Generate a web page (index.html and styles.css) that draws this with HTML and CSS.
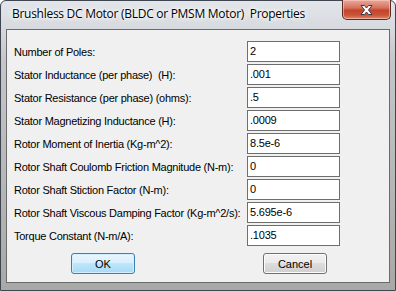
FILE: index.html
```html
<!DOCTYPE html>
<html>
<head>
<meta charset="utf-8">
<link rel="stylesheet" href="styles.css">
</head>
<body>
<div class="window">
  <div class="titlebar">
    <span class="title">Brushless DC Motor (BLDC or PMSM Motor)&nbsp; Properties</span>
    <button class="close" aria-label="Close">
      <svg width="17" height="12" viewBox="0 0 17 12">
        <path d="M3 1.5 L6.5 1.5 L8.5 4 L10.5 1.5 L14 1.5 L10.5 6 L14 10.5 L10.5 10.5 L8.5 8 L6.5 10.5 L3 10.5 L6.5 6 Z" fill="#fff" stroke="#3a3a4a" stroke-width="1" stroke-linejoin="round"/>
      </svg>
    </button>
  </div>
  <div class="client">
    <div class="form">
      <label>Number of Poles:</label><div class="field">2</div>
      <label>Stator Inductance (per phase)&nbsp; (H):</label><div class="field">.001</div>
      <label>Stator Resistance (per phase) (ohms):</label><div class="field">.5</div>
      <label>Stator Magnetizing Inductance (H):</label><div class="field">.0009</div>
      <label>Rotor Moment of Inertia (Kg-m^2):</label><div class="field">8.5e-6</div>
      <label>Rotor Shaft Coulomb Friction Magnitude (N-m):</label><div class="field">0</div>
      <label>Rotor Shaft Stiction Factor (N-m):</label><div class="field">0</div>
      <label>Rotor Shaft Viscous Damping Factor (Kg-m^2/s):</label><div class="field">5.695e-6</div>
      <label>Torque Constant (N-m/A):</label><div class="field">.1035</div>
    </div>
    <div class="buttons">
      <button class="btn ok">OK</button>
      <button class="btn cancel">Cancel</button>
    </div>
  </div>
</div>
</body>
</html>
```
FILE: styles.css
```css
* { box-sizing: border-box; }
html, body { margin: 0; padding: 0; background: #fff; }
.window {
  width: 396px;
  height: 291px;
  border: 1px solid #3f4650;
  border-radius: 6px 6px 0 0;
  background: linear-gradient(to bottom, #e2e5e9 0px, #d6d9dd 28px, #c4c6c9 60px, #a8a8a8 291px);
  padding: 0 5px 7px 5px;
  display: flex;
  flex-direction: column;
}
.titlebar {
  height: 28px;
  display: flex;
  align-items: flex-start;
  justify-content: space-between;
  margin-right: -1px;
}
.title {
  font-family: "Open Sans", "Noto Sans", sans-serif;
  font-size: 12px;
  color: #000;
  margin: 5px 0 0 6px;
  line-height: 16px;
  text-shadow: 0 0 6px #fff, 0 0 6px #fff, 0 0 3px #fff;
  letter-spacing: -0.28px;
}
.close {
  margin-top: -1px;
  width: 49px;
  height: 20px;
  border: 1px solid #5b2b24;
  border-top: none;
  border-radius: 0 0 5px 5px;
  background: linear-gradient(to bottom, #e9a99b 0%, #d7735f 40%, #c2452c 55%, #c9553a 80%, #dc8a6c 100%);
  box-shadow: inset 0 0 0 1px rgba(255,210,200,0.55);
  padding: 0;
  display: flex;
  align-items: center;
  justify-content: center;
}
.close svg { display: block; margin-top: 1px; }
.client {
  flex: 1;
  border: 1px solid #6b6b6b;
  background: #f0f0f0;
  padding: 11px 0 0 7px;
  font-family: "Liberation Sans", Arial, sans-serif;
  font-size: 11px;
  color: #000;
}
.form {
  display: grid;
  grid-template-columns: 233px 93px;
  grid-auto-rows: 21px;
  row-gap: 2px;
  align-items: center;
}
.form label { white-space: nowrap; letter-spacing: -0.25px; }
.field {
  height: 21px;
  background: #fff;
  border: 1px solid #6e6e6e;
  padding: 0 0 0 2px;
  line-height: 19px;
  letter-spacing: -0.2px;
}
.buttons {
  display: flex;
  margin-top: 7px;
  padding-left: 57px;
  gap: 128px;
}
.btn {
  width: 64px;
  height: 21px;
  border-radius: 3px;
  font-family: "Liberation Sans", Arial, sans-serif;
  font-size: 11px;
  color: #000;
  padding: 0;
}
.btn.ok {
  border: 1px solid #3c7fb1;
  background: linear-gradient(to bottom, #eaf6fd 0%, #d9f0fc 45%, #bee6fd 50%, #a7d9f5 100%);
  box-shadow: inset 0 0 0 1px #d0f0ff;
}
.btn.cancel {
  border: 1px solid #707070;
  background: linear-gradient(to bottom, #f2f2f2 0%, #ebebeb 45%, #dddddd 50%, #cfcfcf 100%);
  box-shadow: inset 0 0 0 1px #fcfcfc;
}
```
